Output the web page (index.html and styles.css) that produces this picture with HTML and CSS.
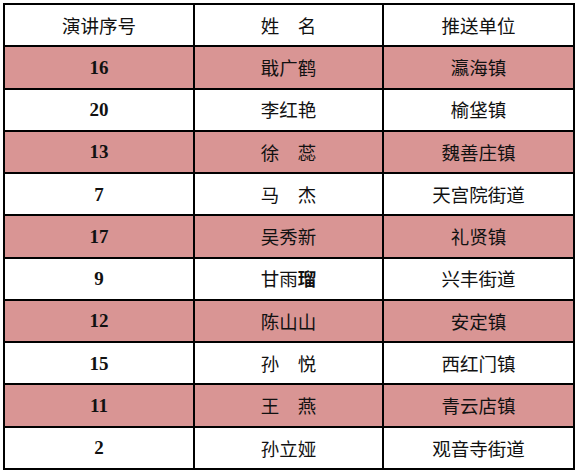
FILE: index.html
```html
<!DOCTYPE html>
<html lang="zh-CN">
<head>
<meta charset="utf-8">
<link rel="stylesheet" href="styles.css">
</head>
<body>
<table class="list">
  <colgroup><col class="c1"><col class="c2"><col class="c3"></colgroup>
  <tr class="head"><td>演讲序号</td><td>姓　名</td><td>推送单位</td></tr>
  <tr class="pink"><td class="num">16</td><td>戢广鹤</td><td>瀛海镇</td></tr>
  <tr><td class="num">20</td><td>李红艳</td><td>榆垡镇</td></tr>
  <tr class="pink"><td class="num">13</td><td>徐　蕊</td><td>魏善庄镇</td></tr>
  <tr><td class="num">7</td><td>马　杰</td><td>天宫院街道</td></tr>
  <tr class="pink"><td class="num">17</td><td>吴秀新</td><td>礼贤镇</td></tr>
  <tr><td class="num">9</td><td>甘雨<span class="b">瑠</span></td><td>兴丰街道</td></tr>
  <tr class="pink"><td class="num">12</td><td>陈山山</td><td>安定镇</td></tr>
  <tr><td class="num">15</td><td>孙　悦</td><td>西红门镇</td></tr>
  <tr class="pink"><td class="num">11</td><td>王　燕</td><td>青云店镇</td></tr>
  <tr><td class="num">2</td><td>孙立娅</td><td>观音寺街道</td></tr>
</table>
</body>
</html>
```
FILE: styles.css
```css
html, body {
  margin: 0;
  padding: 0;
  background: #ffffff;
}
body {
  padding: 3px 0 0 3px;
}
.list {
  border-collapse: collapse;
  table-layout: fixed;
  width: 572px;
  font-family: "Noto Sans CJK SC", sans-serif;
  font-size: 18.5px;
  color: #111111;
}
.c1 { width: 190px; }
.c2 { width: 189px; }
.c3 { width: 191px; }
.list tr {
  height: 42.27px;
}
.list td {
  border: 2px solid #000000;
  padding: 0;
  text-align: center;
  vertical-align: middle;
  line-height: 1;
}
.list tr.pink td {
  background: #d99594;
}
.list td.num {
  font-family: "Liberation Serif", "Times New Roman", serif;
  font-weight: bold;
  font-size: 19px;
}
.b {
  font-weight: bold;
}
```
